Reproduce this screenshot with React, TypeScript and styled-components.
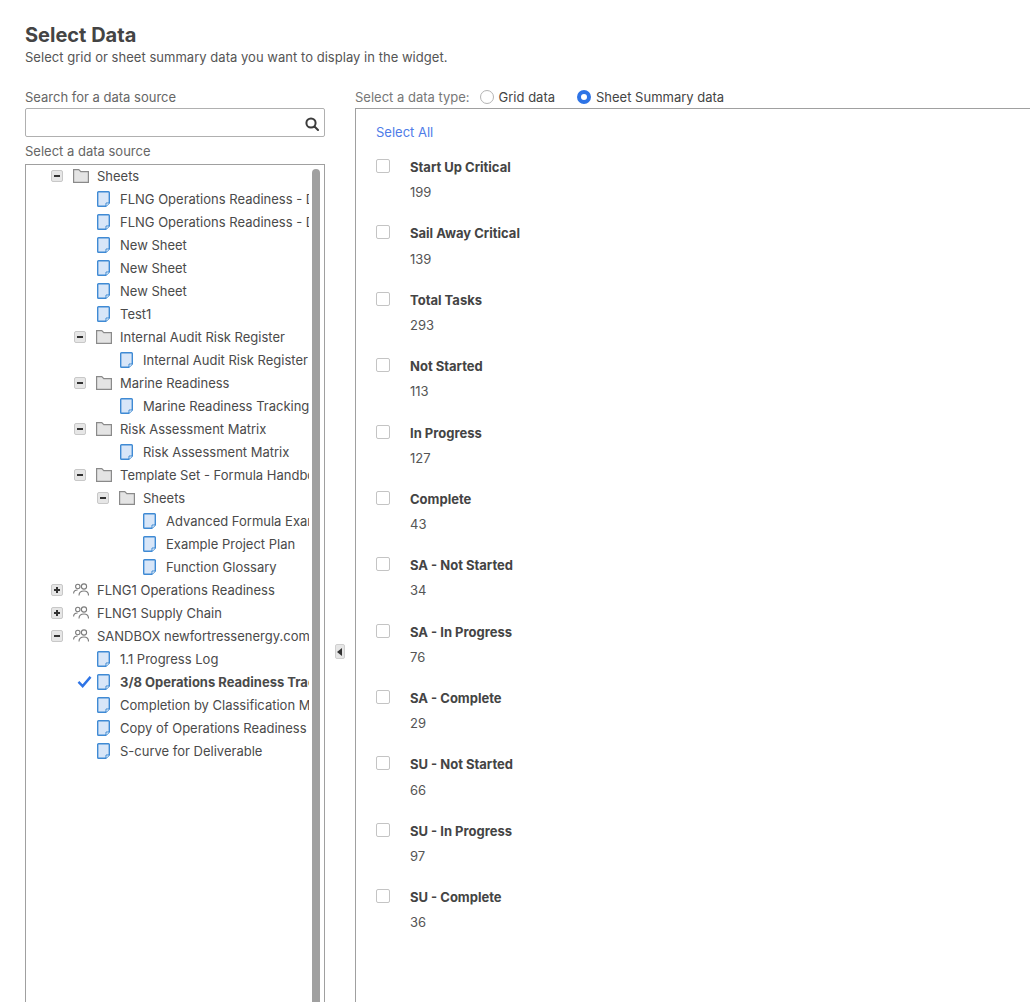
import styled, { createGlobalStyle } from 'styled-components';

const GlobalStyle = createGlobalStyle`
  html, body {
    margin: 0;
    height: 100%;
    overflow: hidden;
    background: #fff;
  }
  body {
    font-family: Inter, "Liberation Sans", sans-serif;
    font-size: 13px;
    color: #444;
  }
`;

type TreeRow = {
  label: string;
  level: number;
  kind: 'folder' | 'workspace' | 'sheet';
  toggle?: '+' | '-';
  checked?: boolean;
};

const treeRows: TreeRow[] = [
  { label: 'Sheets', level: 0, kind: 'folder', toggle: '-' },
  { label: 'FLNG Operations Readiness - Dashboard Data', level: 1, kind: 'sheet' },
  { label: 'FLNG Operations Readiness - Dashboard Metrics', level: 1, kind: 'sheet' },
  { label: 'New Sheet', level: 1, kind: 'sheet' },
  { label: 'New Sheet', level: 1, kind: 'sheet' },
  { label: 'New Sheet', level: 1, kind: 'sheet' },
  { label: 'Test1', level: 1, kind: 'sheet' },
  { label: 'Internal Audit Risk Register', level: 1, kind: 'folder', toggle: '-' },
  { label: 'Internal Audit Risk Register', level: 2, kind: 'sheet' },
  { label: 'Marine Readiness', level: 1, kind: 'folder', toggle: '-' },
  { label: 'Marine Readiness Tracking', level: 2, kind: 'sheet' },
  { label: 'Risk Assessment Matrix', level: 1, kind: 'folder', toggle: '-' },
  { label: 'Risk Assessment Matrix', level: 2, kind: 'sheet' },
  { label: 'Template Set - Formula Handbook', level: 1, kind: 'folder', toggle: '-' },
  { label: 'Sheets', level: 2, kind: 'folder', toggle: '-' },
  { label: 'Advanced Formula Examples', level: 3, kind: 'sheet' },
  { label: 'Example Project Plan', level: 3, kind: 'sheet' },
  { label: 'Function Glossary', level: 3, kind: 'sheet' },
  { label: 'FLNG1 Operations Readiness', level: 0, kind: 'workspace', toggle: '+' },
  { label: 'FLNG1 Supply Chain', level: 0, kind: 'workspace', toggle: '+' },
  { label: 'SANDBOX newfortressenergy.com', level: 0, kind: 'workspace', toggle: '-' },
  { label: '1.1 Progress Log', level: 1, kind: 'sheet' },
  { label: '3/8 Operations Readiness Tracker', level: 1, kind: 'sheet', checked: true },
  { label: 'Completion by Classification Metrics', level: 1, kind: 'sheet' },
  { label: 'Copy of Operations Readiness Tracker', level: 1, kind: 'sheet' },
  { label: 'S-curve for Deliverable', level: 1, kind: 'sheet' },
];

const summaryFields = [
  { name: 'Start Up Critical', value: 199 },
  { name: 'Sail Away Critical', value: 139 },
  { name: 'Total Tasks', value: 293 },
  { name: 'Not Started', value: 113 },
  { name: 'In Progress', value: 127 },
  { name: 'Complete', value: 43 },
  { name: 'SA - Not Started', value: 34 },
  { name: 'SA - In Progress', value: 76 },
  { name: 'SA - Complete', value: 29 },
  { name: 'SU - Not Started', value: 66 },
  { name: 'SU - In Progress', value: 97 },
  { name: 'SU - Complete', value: 36 },
];

function SheetIcon() {
  return (
    <svg width="14" height="16" viewBox="0 0 14 16">
      <path
        d="M1.500.7h10a.8.8 0 0 1 .8.800V12l-3.500 3.300H1.500a.8.8 0 0 1-.8-.8V1.500a.8.8 0 0 1 .8-.8z"
        fill="#d8e6f8"
        stroke="#3f8ad4"
        strokeWidth="1.400"
      />
      <path d="M9 15V12h3.300" fill="#fff" stroke="#3f8ad4" />
    </svg>
  );
}

function FolderIcon() {
  return (
    <svg width="16" height="14" viewBox="0 0 16 14">
      <path
        d="M.6.6h5.200l2 2h7.600v10.800H.6z"
        fill="#e4e4e4"
        stroke="#8a8a8a"
        strokeWidth="1.200"
      />
    </svg>
  );
}

function WorkspaceIcon() {
  return (
    <svg width="16" height="14" viewBox="0 0 16 14" fill="none" stroke="#7c7c7c" strokeWidth="1.100">
      <circle cx="4.800" cy="3.500" r="2.200" />
      <circle cx="11" cy="3.500" r="2.600" />
      <path d="M.6 10.500c0-2 1.400-3.500 4-3.500" />
      <path d="M6 12.500c0-2.800 1.800-4.500 5-4.500s4.500 1.700 4.500 4.500" />
    </svg>
  );
}

function rowIcon(kind: TreeRow['kind']) {
  if (kind === 'folder') return <FolderIcon />;
  if (kind === 'workspace') return <WorkspaceIcon />;
  return <SheetIcon />;
}

export default function App() {
  return (
    <>
      <GlobalStyle />
      <Page>
        <Title>Select Data</Title>
        <Subtitle>Select grid or sheet summary data you want to display in the widget.</Subtitle>
        <Columns>
          <LeftColumn>
            <FieldLabel>Search for a data source</FieldLabel>
            <SearchBox>
              <SearchInput />
              <SearchIcon viewBox="0 0 14 14" fill="none" stroke="#3c3c3c" strokeWidth="2">
                <circle cx="6" cy="6" r="4.600" />
                <path d="M9.500 9.500L13 13" strokeLinecap="round" />
              </SearchIcon>
            </SearchBox>
            <SourceLabel>Select a data source</SourceLabel>
            <TreePanel>
              <TreeList>
                {treeRows.map((row, i) => (
                  <Row key={i} $level={row.level} $sheet={row.kind === 'sheet'}>
                    {row.toggle && <Toggle>{row.toggle === '+' ? <Plus /> : <Minus />}</Toggle>}
                    {row.checked && (
                      <CheckMark viewBox="0 0 16 14" fill="none" stroke="#2e74e6" strokeWidth="2.600">
                        <path d="M1.500 7.500L6 12 14.500 2" />
                      </CheckMark>
                    )}
                    <IconSlot $sheet={row.kind === 'sheet'}>{rowIcon(row.kind)}</IconSlot>
                    <RowLabel $bold={row.checked}>{row.label}</RowLabel>
                  </Row>
                ))}
              </TreeList>
              <ScrollThumb />
            </TreePanel>
          </LeftColumn>
          <Divider>
            <CollapseButton>
              <svg width="6" height="8" viewBox="0 0 6 8">
                <path d="M5 0v8L0 4z" fill="#333" />
              </svg>
            </CollapseButton>
          </Divider>
          <RightColumn>
            <TypeBar>
              <TypeLabel>Select a data type:</TypeLabel>
              <RadioOption>
                <Radio />
                Grid data
              </RadioOption>
              <RadioOption>
                <Radio $on />
                Sheet Summary data
              </RadioOption>
            </TypeBar>
            <SummaryPanel>
              <SelectAll>Select All</SelectAll>
              {summaryFields.map((field) => (
                <Field key={field.name}>
                  <Checkbox />
                  <div>
                    <FieldName>{field.name}</FieldName>
                    <FieldValue>{field.value}</FieldValue>
                  </div>
                </Field>
              ))}
            </SummaryPanel>
          </RightColumn>
        </Columns>
      </Page>
    </>
  );
}

const Page = styled.div`
  box-sizing: border-box;
  height: 1002px;
  padding: 24px 0 0 25px;
  overflow: hidden;
`;

const Title = styled.h1`
  margin: 0;
  font-size: 20px;
  line-height: 22px;
  font-weight: 700;
  color: #444;
`;

const Subtitle = styled.p`
  margin: 2px 0 0;
  height: 18px;
  line-height: 18px;
  font-size: 13px;
  letter-spacing: 0.03px;
  color: #555;
`;

const Columns = styled.div`
  display: flex;
  margin-top: 22px;
  height: 930px;
`;

const LeftColumn = styled.div`
  display: flex;
  flex-direction: column;
  width: 300px;
  flex: none;
`;

const FieldLabel = styled.div`
  height: 20px;
  line-height: 18px;
  color: #666;
`;

const SourceLabel = styled(FieldLabel)`
  margin-top: 5px;
`;

const SearchBox = styled.div`
  position: relative;
  box-sizing: border-box;
  height: 29px;
  border: 1px solid #b0b0b0;
  border-radius: 2px;
`;

const SearchInput = styled.input`
  box-sizing: border-box;
  width: 100%;
  height: 100%;
  border: none;
  outline: none;
  background: transparent;
`;

const SearchIcon = styled.svg`
  position: absolute;
  right: 5px;
  top: 8px;
  width: 14px;
  height: 14px;
`;

const TreePanel = styled.div`
  position: relative;
  flex: 1;
  box-sizing: border-box;
  border: 1px solid #a0a0a0;
  border-bottom: none;
  margin-top: 2px;
  overflow: hidden;
`;

const TreeList = styled.div`
  width: 282.5px;
  margin-top: -1px;
  overflow: hidden;
`;

const Row = styled.div<{ $level: number; $sheet: boolean }>`
  position: relative;
  display: flex;
  align-items: center;
  height: 23px;
  padding-left: ${(p) => 47 + p.$level * 23 + (p.$sheet ? 1 : 0)}px;
  white-space: nowrap;
`;

const Toggle = styled.span`
  position: absolute;
  box-sizing: border-box;
  margin-left: -22px;
  width: 12px;
  height: 12px;
  border: 1px solid #c8c8c8;
  border-radius: 2px;
  background: #e6e6e6;
`;

const Minus = styled.i`
  position: absolute;
  left: 2px;
  top: 4px;
  width: 6px;
  height: 2px;
  background: #333;
`;

const Plus = styled(Minus)`
  &::after {
    content: '';
    position: absolute;
    left: 2px;
    top: -2px;
    width: 2px;
    height: 6px;
    background: #333;
  }
`;

const CheckMark = styled.svg`
  position: absolute;
  margin-left: -20px;
  width: 15px;
  height: 13px;
`;

const IconSlot = styled.span<{ $sheet: boolean }>`
  display: flex;
  flex: none;
  align-items: center;
  width: ${(p) => (p.$sheet ? 23 : 24)}px;
`;

const RowLabel = styled.span<{ $bold?: boolean }>`
  font-weight: ${(p) => (p.$bold ? 700 : 400)};
  color: #4a4a4a;
`;

const ScrollThumb = styled.div`
  position: absolute;
  top: 4px;
  right: 4px;
  bottom: 0;
  width: 8px;
  border-radius: 4px 4px 0 0;
  background: #a0a0a0;
`;

const Divider = styled.div`
  position: relative;
  flex: none;
  width: 30px;
`;

const CollapseButton = styled.div`
  position: absolute;
  left: 10px;
  top: 556px;
  display: flex;
  align-items: center;
  justify-content: center;
  box-sizing: border-box;
  width: 10px;
  height: 15px;
  border: 1px solid #d0d0d0;
  border-radius: 2px;
  background: #e6e6e6;
`;

const RightColumn = styled.div`
  display: flex;
  flex-direction: column;
  flex: 1;
  min-width: 0;
`;

const TypeBar = styled.div`
  display: flex;
  align-items: center;
  height: 18px;
  margin-bottom: 2px;
`;

const TypeLabel = styled.span`
  color: #777;
  margin-right: 10px;
`;

const RadioOption = styled.label`
  display: flex;
  align-items: center;
  gap: 5px;
  margin-right: 22px;
  color: #444;
`;

const Radio = styled.span<{ $on?: boolean }>`
  box-sizing: border-box;
  width: 14px;
  height: 14px;
  border-radius: 50%;
  border: ${(p) => (p.$on ? '4px solid #2e74e6' : '1px solid #b4b4b4')};
  background: #fff;
`;

const SummaryPanel = styled.div`
  flex: 1;
  border: 1px solid #a0a0a0;
  border-right: none;
  border-bottom: none;
  padding: 14px 20px 0;
`;

const SelectAll = styled.a`
  display: block;
  height: 18px;
  line-height: 18px;
  color: #4f7ce8;
  margin-bottom: 17.1px;
`;

const Field = styled.div`
  display: flex;
  height: 66.36px;
`;

const Checkbox = styled.span`
  box-sizing: border-box;
  flex: none;
  width: 14px;
  height: 14px;
  margin: 1px 20px 0 0;
  border: 1px solid #c4c4c4;
  border-radius: 2px;
  background: #fff;
`;

const FieldName = styled.div`
  height: 18px;
  line-height: 18px;
  font-weight: 700;
  color: #444;
`;

const FieldValue = styled.div`
  height: 18px;
  margin-top: 7.2px;
  line-height: 18px;
  color: #555;
`;
